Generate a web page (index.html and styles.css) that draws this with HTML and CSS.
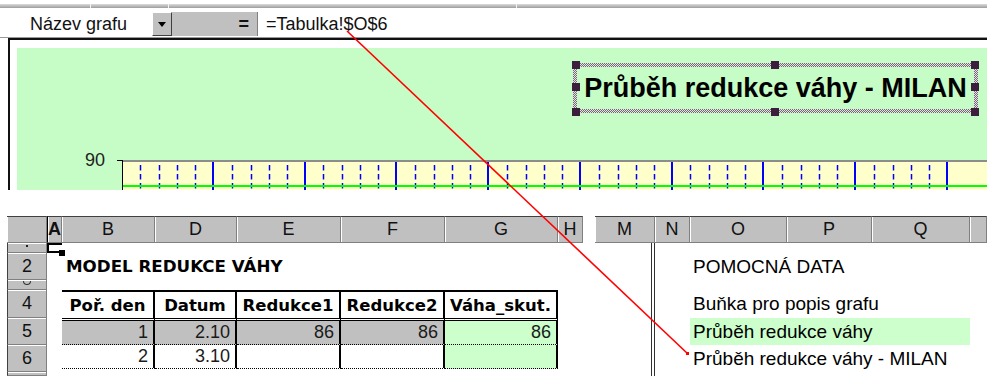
FILE: index.html
```html
<!DOCTYPE html>
<html lang="cs">
<head>
  <meta charset="UTF-8" />
  <title>Model redukce váhy</title>
  <link rel="stylesheet" href="styles.css">
</head>
<body>

  <div class="toolbar-edge">
    <span class="seg seg-a"></span><span class="seg seg-b"></span><span class="seg seg-c"></span><span class="seg seg-d"></span>
  </div>

  <div class="formula-bar">
    <div class="name-box">Název grafu</div>
    <div class="drop-btn"><span class="arrow"></span></div>
    <div class="eq-area">=</div>
    <div class="formula">=Tabulka!$O$6</div>
  </div>

  <div class="chart-window">
    <div class="chart-frame">
      <div class="chart-area">
        <div class="chart-title">
          <span class="title-text">Průběh redukce váhy - MILAN</span>
          <i class="handle h-tl"></i><i class="handle h-tc"></i><i class="handle h-tr"></i>
          <i class="handle h-ml"></i><i class="handle h-mr"></i>
          <i class="handle h-bl"></i><i class="handle h-bc"></i><i class="handle h-br"></i>
        </div>
        <div class="plot-row">
          <div class="axis-label">90</div>
          <div class="tick"></div>
          <svg class="plot" width="865" height="30" viewBox="0 0 865 30">
            <defs>
              <g id="seg">
                <line class="minor" x1="18.5" y1="0" x2="18.5" y2="30" />
                <line class="minor" x1="37.5" y1="0" x2="37.5" y2="30" />
                <line class="minor" x1="55.5" y1="0" x2="55.5" y2="30" />
                <line class="minor" x1="73.5" y1="0" x2="73.5" y2="30" />
                <line class="major" x1="91" y1="0" x2="91" y2="30" />
              </g>
            </defs>
            <rect width="865" height="30" fill="#ffffcc" />
            <use href="#seg" x="0" />
            <use href="#seg" x="92" />
            <use href="#seg" x="183" />
            <use href="#seg" x="275" />
            <use href="#seg" x="367" />
            <use href="#seg" x="459" />
            <use href="#seg" x="550" />
            <use href="#seg" x="642" />
            <use href="#seg" x="734" />
            <rect y="25" width="865" height="2" fill="#00ff00" />
            <rect width="865" height="2" fill="#8c8c8c" />
            <rect width="1" height="30" fill="#000" />
          </svg>
        </div>
      </div>
    </div>
  </div>

  <div class="sheet">
    <!-- left pane: rows + data table -->
    <div class="grid grid-left">
      <div class="ch"></div>
      <div class="ch active">A</div>
      <div class="ch">B</div>
      <div class="ch">D</div>
      <div class="ch">E</div>
      <div class="ch">F</div>
      <div class="ch">G</div>
      <div class="ch">H</div>

      <div class="rh r1"><span class="dot"></span></div>
      <div class="rh r2">2</div>
      <div class="rh r3"><span class="arc"></span></div>
      <div class="rh r4">4</div>
      <div class="rh r5">5</div>
      <div class="rh r6">6</div>
      <div class="rh r7"></div>

      <div class="sel r1"></div>
      <div class="sheet-title r2">MODEL REDUKCE VÁHY</div>

      <div class="table-wrap">
        <table class="data">
          <tr>
            <th class="w-b">Poř. den</th>
            <th class="w-d">Datum</th>
            <th class="w-e">Redukce1</th>
            <th class="w-f">Redukce2</th>
            <th class="w-g">Váha_skut.</th>
          </tr>
          <tr class="shaded">
            <td>1</td>
            <td>2.10</td>
            <td>86</td>
            <td>86</td>
            <td class="fact">86</td>
          </tr>
          <tr>
            <td>2</td>
            <td>3.10</td>
            <td></td>
            <td></td>
            <td class="fact"></td>
          </tr>
        </table>
      </div>
    </div>

    <!-- right pane: helper data -->
    <div class="grid grid-right">
      <div class="ch">M</div>
      <div class="ch">N</div>
      <div class="ch">O</div>
      <div class="ch">P</div>
      <div class="ch">Q</div>
      <div class="ch"></div>

      <div class="split"></div>
      <div class="note r2">POMOCNÁ DATA</div>
      <div class="note r4">Buňka pro popis grafu</div>
      <div class="note hl r5">Průběh redukce váhy</div>
      <div class="note r6">Průběh redukce váhy - MILAN</div>
    </div>
  </div>

  <svg class="link-line" width="987" height="376" viewBox="0 0 987 376">
    <line x1="347" y1="31" x2="688" y2="354" stroke="#ff0000" stroke-width="1.6" />
    <rect x="686" y="352" width="3" height="3" fill="#ff0000" />
  </svg>

</body>
</html>
```

FILE: styles.css
```css
body {
  margin: 0;
  width: 987px;
  height: 376px;
  overflow: hidden;
  position: relative;
  background: #fff;
  font-family: "Liberation Sans", Arial, sans-serif;
  color: #111;
}

/* toolbar bottom edge */
.toolbar-edge {
  display: flex;
  height: 4px;
  margin: 4px 0 1px;
}
.seg {
  background: linear-gradient(#dcdcdc, #9c9c9c);
  border-right: 1px solid #f4f4f4;
}
.seg-a { width: 90px; }
.seg-b { width: 77px; }
.seg-c { width: 347px; }
.seg-d { flex: 1; border-right: none; }

/* formula bar */
.formula-bar {
  display: flex;
  height: 28px;
  padding-top: 3px;
  box-sizing: border-box;
}
.name-box {
  margin-left: 8px;
  width: 142px;
  height: 24px;
  padding-left: 22px;
  box-sizing: border-box;
  background: #fff;
  font-size: 18px;
  line-height: 24px;
}
.drop-btn {
  margin-left: 2px;
  width: 20px;
  height: 24px;
  box-sizing: border-box;
  background: #c0c0c0;
  border: 1px solid;
  border-color: #fff #404040 #404040 #fff;
  display: flex;
  align-items: center;
  justify-content: center;
}
.arrow {
  width: 0;
  height: 0;
  border-left: 4px solid transparent;
  border-right: 4px solid transparent;
  border-top: 5px solid #000;
}
.eq-area {
  width: 86px;
  height: 24px;
  box-sizing: border-box;
  padding-right: 8px;
  background: #c0c0c0;
  border-right: 1px solid #808080;
  text-align: right;
  font-weight: bold;
  font-size: 18px;
  line-height: 24px;
}
.formula {
  flex: 1;
  height: 24px;
  padding-left: 8px;
  font-size: 18px;
  line-height: 24px;
}

/* chart window */
.chart-window {
  height: 153px;
  box-sizing: border-box;
  border-top: 1px solid #9a9a9a;
}
.chart-frame {
  margin-left: 8px;
  border-top: 2px solid #111;
  border-left: 2px solid #111;
  padding: 8px 0 0 7px;
}
.chart-area {
  height: 142px;
  overflow: hidden;
  background: #c6fdc6;
  display: flex;
  flex-direction: column;
}
.chart-title {
  position: relative;
  align-self: flex-start;
  margin: 15px 0 0 556px;
  width: 405px;
  height: 50px;
  box-sizing: border-box;
  padding: 4px;
  background: repeating-conic-gradient(#756575 0 25%, #e6e6e6 0 50%) 0 0 / 2px 2px;
}
.title-text {
  display: block;
  height: 100%;
  background: #c6fdc6;
  font-weight: bold;
  font-size: 27px;
  line-height: 42px;
  text-align: center;
  white-space: nowrap;
  color: #000;
}
.handle {
  position: absolute;
  width: 8px;
  height: 8px;
  background: #3c1f3c;
}
.h-tl { left: -1px; top: -2px; }
.h-tc { left: 198px; top: -2px; }
.h-tr { right: -1px; top: -2px; }
.h-ml { left: -1px; top: 20px; }
.h-mr { right: -1px; top: 20px; }
.h-bl { left: -1px; bottom: -3px; }
.h-bc { left: 198px; bottom: -3px; }
.h-br { right: -1px; bottom: -3px; }

.plot-row {
  display: flex;
  margin-top: 47px;
  height: 30px;
}
.axis-label {
  width: 88px;
  margin-top: -10px;
  height: 20px;
  line-height: 20px;
  font-size: 18px;
  text-align: right;
  color: #222;
}
.tick {
  margin-left: 12px;
  width: 5px;
  height: 1px;
  background: #000;
}
.plot { display: block; flex: none; }
.minor {
  stroke: #0000ff;
  stroke-width: 1.5;
  stroke-dasharray: 5.5 3.5;
  stroke-dashoffset: 4;
}
.major {
  stroke: #0000ff;
  stroke-width: 2;
}

/* spreadsheet */
.sheet {
  display: flex;
  margin-top: 26px;
}
.grid {
  display: grid;
  grid-template-rows: 27px 10px 27px 10px 28px 27px 27px 1fr;
  height: 160px;
  overflow: hidden;
}
.grid-left {
  margin-left: 7px;
  grid-template-columns: 40px 15px 93px 82px 104px 104px 113px 25px;
}
.grid-right {
  margin-left: 12px;
  flex: 1;
  grid-template-columns: 60px 35px 97px 85px 98px 1fr;
}
.r1 { grid-row: 2; }
.r2 { grid-row: 3; }
.r3 { grid-row: 4; }
.r4 { grid-row: 5; }
.r5 { grid-row: 6; }
.r6 { grid-row: 7; }
.r7 { grid-row: 8; }

.ch {
  grid-row: 1;
  background: #c0c0c0;
  border-top: 1px solid #404040;
  border-bottom: 1px solid #808080;
  border-right: 1px solid #808080;
  box-shadow: inset 1px 0 0 #fff;
  box-sizing: border-box;
  font-size: 18px;
  line-height: 25px;
  text-align: center;
  overflow: hidden;
}
.ch.active {
  font-weight: bold;
  border-left: 1px solid #000;
}
.rh {
  grid-column: 1;
  background: #c0c0c0;
  border-left: 1px solid #404040;
  border-right: 1px solid #808080;
  border-bottom: 1px solid #808080;
  box-shadow: inset 0 1px 0 #fff;
  box-sizing: border-box;
  font-size: 18px;
  text-align: center;
  overflow: hidden;
  display: flex;
  align-items: center;
  justify-content: center;
}
/* squashed rows 1 and 3 only show a sliver of their numbers */
.dot {
  width: 2px;
  height: 2px;
  margin-top: -3px;
  background: #222;
}
.arc {
  width: 6px;
  height: 3px;
  margin-top: -4px;
  border: 1px solid #333;
  border-top: none;
  border-radius: 0 0 4px 4px;
}
.sel {
  grid-column: 2;
  position: relative;
  border: 2px solid #000;
  border-right: none;
}
.sel::after {
  content: "";
  position: absolute;
  right: -3px;
  bottom: -5px;
  width: 6px;
  height: 6px;
  background: #000;
}
.sheet-title {
  grid-column: 3 / 9;
  padding-left: 4px;
  font-family: "DejaVu Sans", sans-serif;
  font-weight: bold;
  font-size: 16.7px;
  line-height: 27px;
  white-space: nowrap;
  color: #000;
}

.table-wrap {
  grid-column: 3 / 9;
  grid-row: 5 / 9;
  overflow: hidden;
}
.data {
  margin-left: -2px;
  border-collapse: separate;
  border-spacing: 0;
  table-layout: fixed;
  border-left: 2px solid #000;
  border-top: 2px solid #000;
}
.data th,
.data td {
  box-sizing: border-box;
  border-right: 2px solid #000;
  padding: 0 5px 0 3px;
  white-space: nowrap;
}
.data th {
  height: 29px;
  border-bottom: 3px double #000;
  background: #fff;
  font-family: "DejaVu Sans", sans-serif;
  font-weight: bold;
  font-size: 16.5px;
  text-align: center;
  padding: 0;
  color: #000;
}
.data td {
  height: 24px;
  border-bottom: 1px dotted #000;
  font-size: 18px;
  text-align: right;
  color: #1a1a1a;
}
.w-b { width: 93px; }
.w-d { width: 82px; }
.w-e { width: 104px; }
.w-f { width: 104px; }
.w-g { width: 113px; }
.shaded td { background: #c0c0c0; }
.data td.fact { background: #ccffcc; }

.split {
  grid-column: 1;
  grid-row: 2 / 9;
  border-right: 4px double #303030;
}
.note {
  grid-column: 3 / 7;
  padding-left: 3px;
  font-size: 19px;
  white-space: nowrap;
  display: flex;
  align-items: center;
  color: #000;
}
.note.hl {
  grid-column: 3 / 6;
  background: #ccffcc;
}

/* annotation arrow over everything */
.link-line {
  position: absolute;
  left: 0;
  top: 0;
  pointer-events: none;
}
```
